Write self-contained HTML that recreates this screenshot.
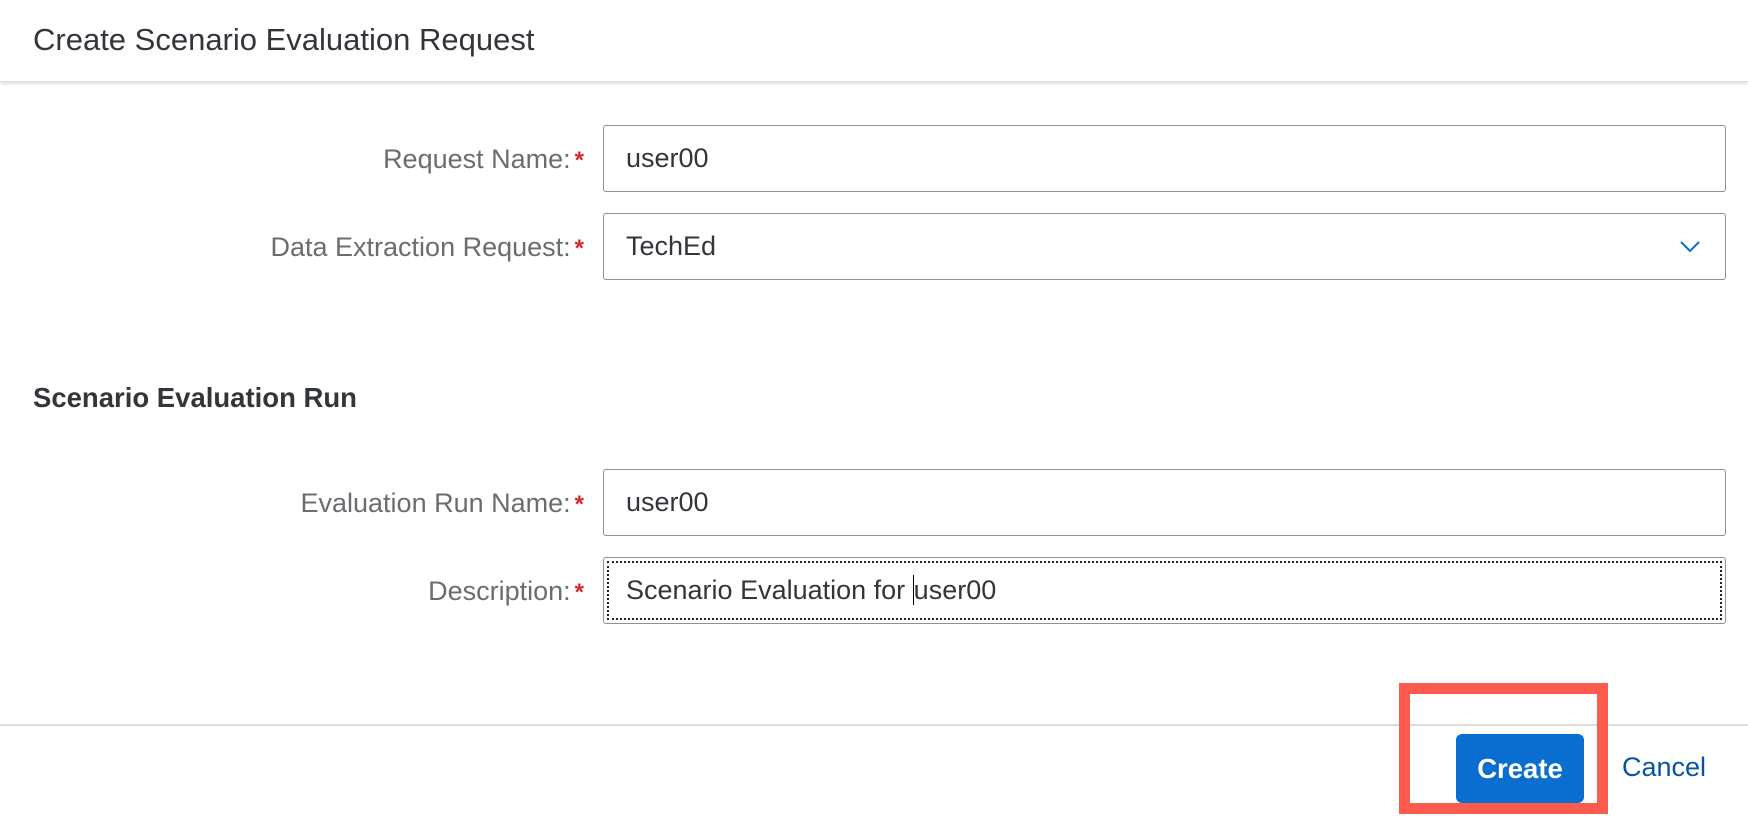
<!DOCTYPE html>
<html><head><style>
body{margin:0;width:1748px;height:816px;background:#fff;font-family:"Liberation Sans",sans-serif;position:relative;overflow:hidden}
.hdr{position:absolute;left:0;top:0;width:1748px;height:81px;border-bottom:1px solid #ddd;box-shadow:0 2px 3px rgba(0,0,0,.12)}
.title{position:absolute;left:33px;top:22px;font-size:31px;color:#32363a}
.lbl{position:absolute;right:1164px;font-size:27px;color:#6a6d70;line-height:32px}
.lbl b{color:#d9272e;font-weight:bold;margin-left:4px;font-size:24px}
.inp{position:absolute;left:603px;width:1123px;height:67px;border:1px solid #89919a;border-radius:3px;box-sizing:border-box;font-size:27px;color:#32363a;padding-left:22px;line-height:65px}
.sec{position:absolute;left:33px;top:382px;font-size:27.5px;font-weight:bold;color:#32363a}
.foot{position:absolute;left:0;top:724px;width:1748px;border-top:2px solid #dcdcdc}
.btn{position:absolute;left:1456px;top:734px;width:128px;height:69px;background:#0a6ed1;border-radius:6px;color:#fff;font-weight:bold;font-size:27.5px;text-align:center;line-height:69px}
.red{position:absolute;left:1399px;top:683px;width:209px;height:131px;box-sizing:border-box;border:11px solid #ff5a4e}
.cancel{position:absolute;left:1622px;top:752px;font-size:27px;color:#0854a0}
</style></head><body>
<div class="hdr"><div class="title">Create Scenario Evaluation Request</div></div>
<div class="lbl" style="top:143px">Request Name:<b>*</b></div>
<div class="inp" style="top:125px">user00</div>
<div class="lbl" style="top:231px">Data Extraction Request:<b>*</b></div>
<div class="inp" style="top:213px">TechEd
<svg style="position:absolute;right:24px;top:26px" width="22" height="14" viewBox="0 0 22 14"><path d="M2 2l9 9 9-9" fill="none" stroke="#0a6ed1" stroke-width="2"/></svg></div>
<div class="sec">Scenario Evaluation Run</div>
<div class="lbl" style="top:487px">Evaluation Run Name:<b>*</b></div>
<div class="inp" style="top:469px">user00</div>
<div class="lbl" style="top:575px">Description:<b>*</b></div>
<div class="inp" style="top:557px;outline:2px dotted #222;outline-offset:-6px">Scenario Evaluation for <span style="border-left:1px solid #000">user00</span></div>
<div class="foot"></div>
<div class="btn">Create</div>
<div class="red"></div>
<div class="cancel">Cancel</div>
</body></html>
